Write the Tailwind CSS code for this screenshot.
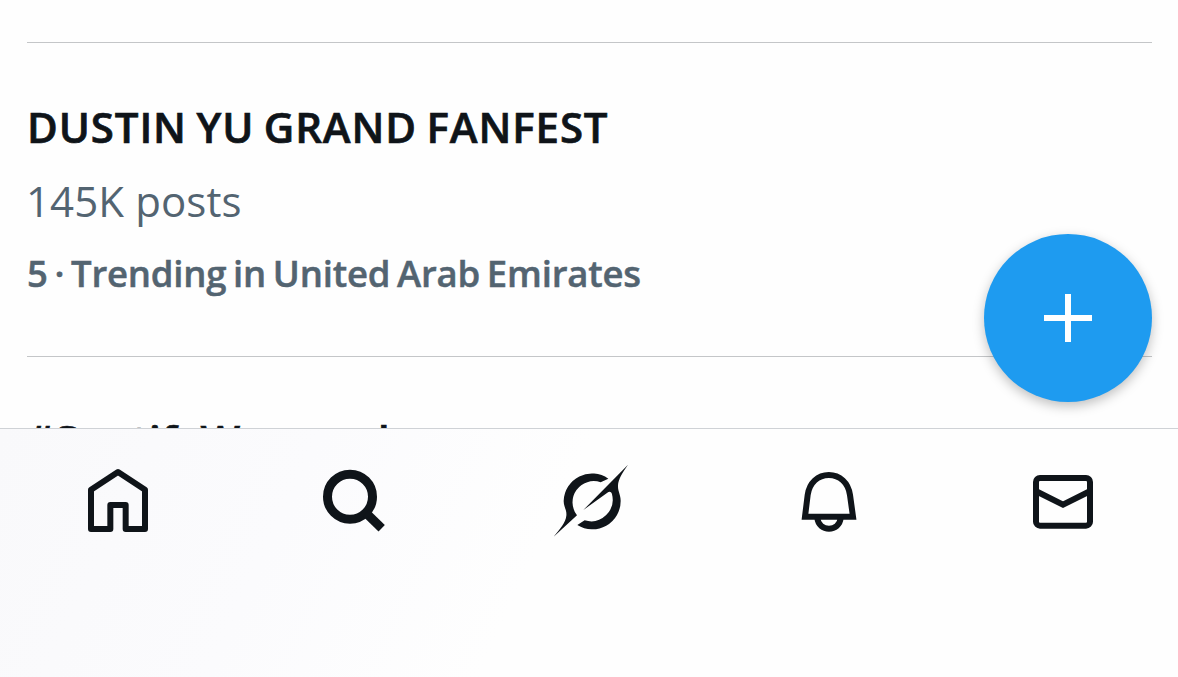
<!DOCTYPE html>
<html lang="en">
<head>
    <meta charset="UTF-8">
    <meta name="viewport" content="width=device-width, initial-scale=1.0">
    <title>Trending</title>
    <script src="https://cdn.jsdelivr.net/npm/@tailwindcss/browser@4"></script>
</head>
<body class="bg-[#fefefe] h-screen overflow-hidden font-['Open_Sans',sans-serif] text-[#0f1419]">
    <div class="relative flex flex-col h-[677px]">
        <!-- Trends list -->
        <main class="h-[428px] overflow-hidden pl-[27px] pr-[26px]">
            <div class="h-[43px] border-b border-[#c4c6c8]"></div>
            <article class="h-[314px] border-b border-[#c4c6c8] pt-[54px] whitespace-nowrap">
                <h2 class="text-[42px] leading-[60px] font-semibold tracking-[0.9px] [word-spacing:-2.3px] [-webkit-text-stroke:0.7px_#0f1419]">DUSTIN YU GRAND FANFEST</h2>
                <p class="mt-[14px] -ml-px text-[42px] leading-[60px] tracking-[0.1px] text-[#536471]">145K posts</p>
                <p class="mt-[14px] text-[36.5px] leading-[57px] font-semibold tracking-[-0.2px] [word-spacing:-2.5px] [-webkit-text-stroke:0.5px_#536471] text-[#536471]">5 · Trending in United Arab Emirates</p>
            </article>
            <article class="pt-[53px] whitespace-nowrap">
                <h2 class="text-[42px] leading-[60px] font-semibold tracking-[0.7px] [-webkit-text-stroke:0.7px_#0f1419]">#SpotifyWrapped</h2>
            </article>
        </main>

        <!-- Bottom navigation -->
        <nav class="flex-1 flex gap-[136px] items-start pl-[70px] pt-[26px] border-t border-[#cfd2d6] bg-[linear-gradient(115deg,#f9f9fb_0%,#fbfbfd_25%,#fefefe_46%)]">
            <svg class="w-[100px] h-[90px] shrink-0" viewBox="0 0 300 270" fill="none" stroke="currentColor" stroke-width="18" stroke-linejoin="round">
                <path d="M144 51L63 104V222H121V150H167V222H225V104Z"/>
            </svg>
            <svg class="w-[100px] h-[90px] shrink-0" viewBox="-12 0 300 270" fill="none" stroke="currentColor" stroke-width="27">
                <circle cx="120" cy="125" r="67.5"/>
                <path d="M168 174L215 220"/>
            </svg>
            <svg class="w-[100px] h-[90px] shrink-0" viewBox="-9 0 300 270" fill="currentColor">
                <path d="M190 71A85 85 0 0 0 56 138C56 155 66 166 64 182C62 202 46 220 26 245L96 181A63.5 63.5 0 0 1 167 82Z"/>
                <path d="M249 29L115 165L187 113C194 108 200 111 201 118A65 65 0 0 1 119 196L97 210A85 85 0 0 0 227 137C227 118 218 109 219 91C220 72 232 53 249 29Z"/>
            </svg>
            <svg class="w-[100px] h-[90px] shrink-0" viewBox="-6 0 300 270" fill="none" stroke="currentColor" stroke-width="18">
                <path d="M75 185L83 120C88 83 114 60 146.500 60C179 60 205 83 210 120L219 185Z"/>
                <path d="M112 188C115 232 179 232 182 188"/>
            </svg>
            <svg class="w-[100px] h-[90px] shrink-0" viewBox="-3 0 300 270" fill="none" stroke="currentColor" stroke-width="18">
                <rect x="63" y="69" width="162" height="143" rx="12"/>
                <path d="M68 111L144 149L220 111"/>
            </svg>
        </nav>

        <!-- Floating compose button -->
        <button class="absolute left-[984px] top-[234px] size-[168px] rounded-full bg-[#1e9bf0] text-white flex items-center justify-center shadow-[0_4px_12px_rgba(0,0,0,0.25)]" aria-label="Compose">
            <svg class="size-12" viewBox="0 0 48 48" stroke="currentColor" stroke-width="6">
                <path d="M24 0V48M0 24H48"/>
            </svg>
        </button>
    </div>
</body>
</html>
